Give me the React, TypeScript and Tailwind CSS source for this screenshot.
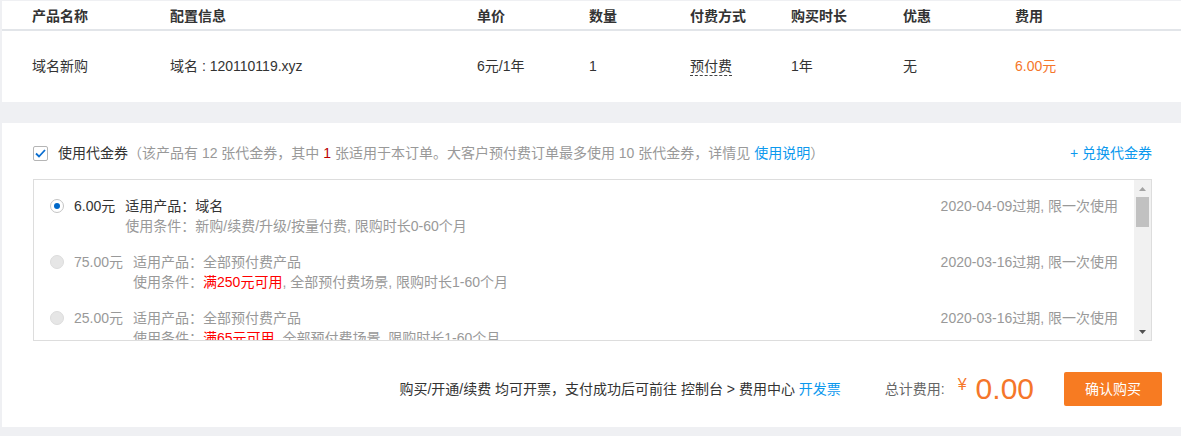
const FONT = { fontFamily: '"Liberation Sans", "Noto Sans CJK SC", sans-serif' };

type Voucher = {
  amount: string;
  product: string;
  cond: { red?: string; rest: string };
  expire: string;
  active?: boolean;
};

const vouchers: Voucher[] = [
  { amount: '6.00元', product: '适用产品：域名', cond: { rest: '新购/续费/升级/按量付费, 限购时长0-60个月' }, expire: '2020-04-09过期, 限一次使用', active: true },
  { amount: '75.00元', product: '适用产品：全部预付费产品', cond: { red: '满250元可用', rest: ', 全部预付费场景, 限购时长1-60个月' }, expire: '2020-03-16过期, 限一次使用' },
  { amount: '25.00元', product: '适用产品：全部预付费产品', cond: { red: '满65元可用', rest: ', 全部预付费场景, 限购时长1-60个月' }, expire: '2020-03-16过期, 限一次使用' },
];

function Radio({ checked }: { checked?: boolean }) {
  if (checked) {
    return (
      <span className="flex h-[14px] w-[14px] shrink-0 items-center justify-center rounded-full border border-[#c4c4c4] bg-white">
        <span className="h-[6px] w-[6px] rounded-full bg-[#0068c9]" />
      </span>
    );
  }
  return <span className="h-[14px] w-[14px] shrink-0 rounded-full border border-[#dcdcdc] bg-[#e6e6e6]" />;
}

export default function App() {
  const cols = 'grid grid-cols-[138px_307px_112px_101px_101px_112px_112px_1fr] pl-[30px]';

  return (
    <div className="h-[436px] w-full bg-[#eff0f3] pl-[2px] pt-[1px] text-[14px] text-[#333]" style={FONT}>
      {/* order table */}
      <div className="bg-white">
        <div className={`${cols} h-[30px] items-center border-b-2 border-[#e2e5e9] pt-[2px] font-bold`}>
          <div>产品名称</div>
          <div>配置信息</div>
          <div>单价</div>
          <div>数量</div>
          <div>付费方式</div>
          <div>购买时长</div>
          <div>优惠</div>
          <div>费用</div>
        </div>
        <div className={`${cols} h-[71px] items-center`}>
          <div>域名新购</div>
          <div>域名 : 120110119.xyz</div>
          <div>6元/1年</div>
          <div>1</div>
          <div>
            <span className="border-b border-dashed border-[#444] pb-[1px]">预付费</span>
          </div>
          <div>1年</div>
          <div>无</div>
          <div className="text-[#f5762a]">6.00元</div>
        </div>
      </div>

      {/* vouchers */}
      <div className="mt-[21px] bg-white pt-[20px] pb-[21px]">
        <div className="flex h-[20px] items-center pl-[31px] pr-[29px]">
          <span className="flex h-[15px] w-[15px] items-center justify-center rounded-[2px] border border-[#b5b5b5]">
            <svg width="11" height="9" viewBox="0 0 11 9" fill="none">
              <path d="M1 4.5 L4 7.5 L10 1" stroke="#0a6ed1" strokeWidth="1.8" />
            </svg>
          </span>
          <span className="ml-[10px]">使用代金券</span>
          <span className="text-[#999]">
            （该产品有 12 张代金券，其中 <span className="text-[#b00]">1</span> 张适用于本订单。大客户预付费订单最多使用 10 张代金券，详情见{' '}
            <span className="text-[#0c99ee]">使用说明</span>）
          </span>
          <span className="ml-auto text-[#0c99ee]">+ 兑换代金券</span>
        </div>

        <div className="mt-4 ml-[31px] mr-[29px] flex h-[162px] border border-[#dddddd]">
          <div className="flex-1 overflow-hidden pt-4 pl-4 pr-4">
            <div className="flex flex-col gap-4">
              {vouchers.map((v) => (
                <div key={v.amount} className={`flex leading-[20px] ${v.active ? 'text-[#333]' : 'text-[#999]'}`}>
                  <div className="flex h-[20px] items-center">
                    <Radio checked={v.active} />
                  </div>
                  <div className="ml-[10px]">{v.amount}</div>
                  <div className="ml-[10px]">
                    <div>{v.product}</div>
                    <div className="text-[#999]">
                      使用条件：{v.cond.red && <span className="text-[#ff0000]">{v.cond.red}</span>}
                      {v.cond.rest}
                    </div>
                  </div>
                  <div className="ml-auto text-[#999]">{v.expire}</div>
                </div>
              ))}
            </div>
          </div>
          {/* scrollbar */}
          <div className="flex w-[17px] flex-col items-center bg-[#f1f1f1]">
            <div className="flex h-[17px] items-center justify-center">
              <svg width="7" height="4" viewBox="0 0 7 4"><path d="M3.5 0 L7 4 L0 4 Z" fill="#a3a3a3" /></svg>
            </div>
            <div className="h-[30px] w-[13px] bg-[#c1c1c1]" />
            <div className="flex-1" />
            <div className="flex h-[17px] items-center justify-center">
              <svg width="7" height="4" viewBox="0 0 7 4"><path d="M0 0 L7 0 L3.5 4 Z" fill="#505050" /></svg>
            </div>
          </div>
        </div>

        <div className="mt-[31px] flex h-[34px] items-center justify-end pr-[19px]">
          <span>
            购买/开通/续费 均可开票，支付成功后可前往 控制台 &gt; 费用中心 <span className="text-[#0c99ee]">开发票</span>
          </span>
          <span className="ml-[44px] text-[#666]">总计费用:</span>
          <span className="ml-[13px] self-start pt-[1px] text-[16px] text-[#f5762a]">¥</span>
          <span className="ml-[9px] text-[30px] leading-none text-[#f5762a]">0.00</span>
          <button className="ml-[30px] h-[34px] w-[98px] rounded-[2px] bg-[#f77b22] text-[14px] text-white">确认购买</button>
        </div>
      </div>
    </div>
  );
}
